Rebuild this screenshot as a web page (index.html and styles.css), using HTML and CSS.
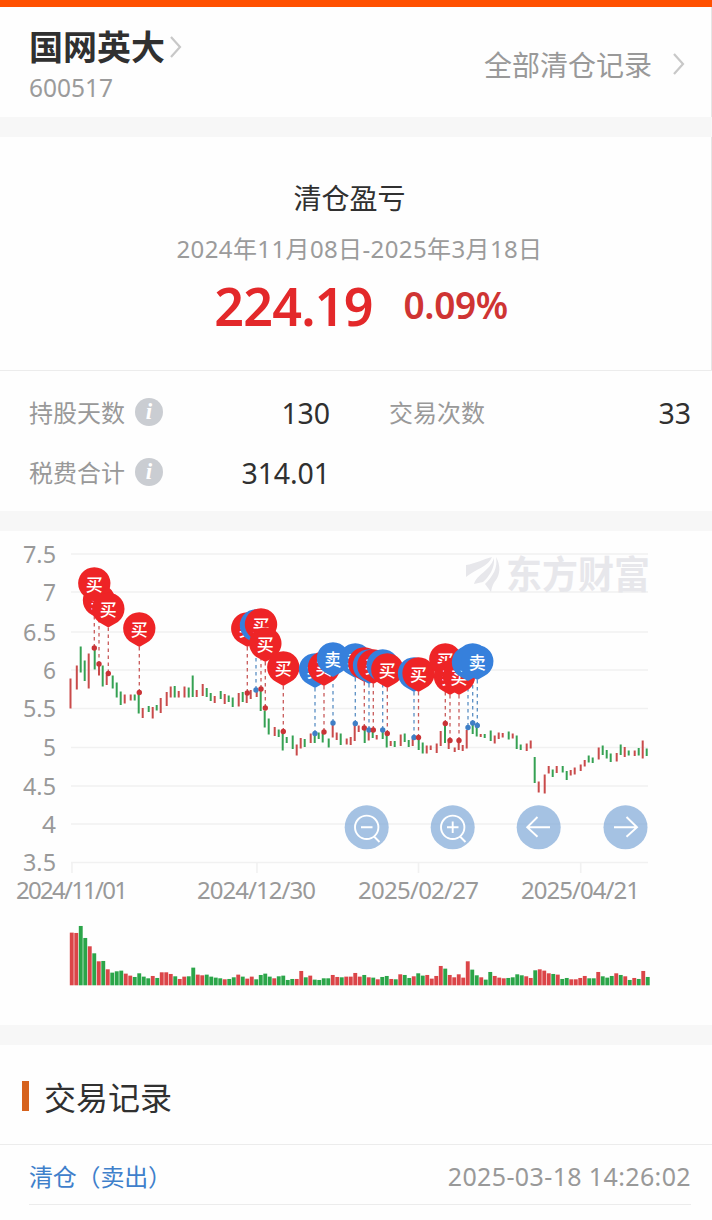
FILE: index.html
```html
<!DOCTYPE html>
<html lang="zh-CN">
<head>
<meta charset="utf-8">
<title>清仓盈亏</title>
<link rel="stylesheet" href="styles.css">
</head>
<body>
<main class="page">
  <div class="topbar"></div>
  <header class="stock">
    <div>
      <div class="stock-name">国网英大<svg class="chev" width="14" height="24" viewBox="0 0 14 24"><path d="M2 2l9 10-9 10"/></svg></div>
      <div class="stock-code">600517</div>
    </div>
    <div class="all-records">全部清仓记录<svg class="chev" width="14" height="24" viewBox="0 0 14 24"><path d="M2 2l9 10-9 10"/></svg></div>
  </header>
  <div class="band"></div>
  <section class="profit">
    <h2 class="profit-title">清仓盈亏</h2>
    <div class="profit-range">2024年11月08日-2025年3月18日</div>
    <div class="profit-values"><span class="amount">224.19</span><span class="percent">0.09%</span></div>
  </section>
  <section class="stats">
    <div class="stat"><span class="label">持股天数</span><span class="info">i</span><span class="value">130</span></div>
    <div class="stat"><span class="label">交易次数</span><span class="value">33</span></div>
    <div class="stat"><span class="label">税费合计</span><span class="info">i</span><span class="value">314.01</span></div>
  </section>
  <div class="band"></div>
  <section class="chart">
    <svg id="chart" width="712" height="494" viewBox="0 531 712 494">
      <g id="grid" class="grid"></g>
      <g class="watermark">
        <path d="M466 565C475 564 483 559 492 557C489 566 476 569 466 577Z"/>
        <path d="M494 558C495 568 489 577 483 582L474 584C477 574 490 571 494 558Z"/>
        <path d="M496 557C501 566 500 574 496 580C492 585 492 588 491 592L485 584C493 576 498 568 496 557Z"/>
        <text x="506" y="588" textLength="144" lengthAdjust="spacingAndGlyphs">东方财富</text>
      </g>
      <g id="axis" class="axis"></g>
      <g id="candles"></g>
      <g id="volume"></g>
      <g id="stems"></g>
      <g id="pins"></g>
      <g class="controls">
        <circle cx="366.7" cy="827.3" r="22"/><circle cx="452.7" cy="827.3" r="22"/>
        <circle cx="538.7" cy="827.3" r="22"/><circle cx="625.5" cy="827.3" r="22"/>
        <path d="M361 827.3h11.5M374 836.5l5.5 5.5"/><circle class="ring" cx="366.7" cy="827.3" r="11.7"/>
        <path d="M447 827.3h11.5M452.7 821.5v11.5M460 836.5l5.5 5.5"/><circle class="ring" cx="452.7" cy="827.3" r="11.7"/>
        <path d="M550 827.3h-22.5M537.5 817l-10.3 10.3 10.3 9.5"/>
        <path d="M614 827.3h22.5M626.5 817l10.5 10.3-10.5 9.5"/>
      </g>
    </svg>
  </section>
  <div class="band"></div>
  <section class="records">
    <h2 class="records-title">交易记录</h2>
    <div class="record"><span class="record-type">清仓（卖出）</span><time class="record-time">2025-03-18 14:26:02</time></div>
  </section>
</main>
<script src="chart.js"></script>
</body>
</html>
```
FILE: styles.css
```css
* { box-sizing: border-box; }
body {
  margin: 0;
  background: #fefefe;
  color: #303030;
  font-family: "Noto Sans", "Noto Sans CJK SC", sans-serif;
}
h2 { margin: 0; font-weight: 400; }
.page { width: 712px; height: 1220px; overflow: hidden; }
.topbar { height: 7px; background: #ff5000; }
.band { height: 20px; background: #f7f7f7; }
.chev { fill: none; stroke: #c8c8c8; stroke-width: 2.2; }

.stock {
  display: flex;
  justify-content: space-between;
  height: 110px;
  padding: 20px 25px 0 29px;
  border-right: 1px solid #e6e6e6;
}
.stock-name {
  display: flex;
  align-items: center;
  gap: 4px;
  height: 40px;
  font-size: 34px;
  font-weight: 700;
  line-height: 40px;
}
.stock-code { margin-top: 6px; font-size: 24.5px; line-height: 30px; color: #9b9b9b; }
.all-records {
  display: flex;
  align-items: center;
  gap: 20px;
  height: 73px;
  font-size: 28px;
  color: #999;
}

.profit {
  height: 233px;
  padding-top: 42px;
  border-right: 1px solid #e6e6e6;
  text-align: center;
}
.profit-title { padding-right: 12px; font-size: 28px; line-height: 38px; }
.profit-range { margin-top: 16px; padding-left: 8px; font-size: 24px; line-height: 32px; letter-spacing: 0.38px; color: #9b9b9b; }
.profit-values {
  display: flex;
  justify-content: center;
  align-items: flex-start;
  gap: 31px;
  margin-top: 8px;
  padding-left: 11px;
  font-weight: 600;
}
.amount { font-size: 52px; line-height: 66px; letter-spacing: -0.8px; color: #e3282a; }
.percent { font-size: 37px; line-height: 64px; letter-spacing: -0.4px; color: #cf3433; }

.stats {
  display: grid;
  grid-template-columns: 301px 302px;
  grid-auto-rows: 60px;
  column-gap: 59px;
  height: 141px;
  padding: 12px 21px 0 29px;
  border-top: 1px solid #ececec;
}
.stat { display: flex; align-items: center; }
.label { margin-top: -3px; font-size: 24px; color: #999; }
.info {
  width: 28px;
  height: 28px;
  margin: -3px 0 0 10px;
  border-radius: 50%;
  background: #cacdd2;
  color: #fff;
  font: italic 700 23px/27px "Liberation Serif", serif;
  text-align: center;
}
.value { margin-left: auto; font-size: 28.5px; letter-spacing: -0.1px; }

.chart { height: 494px; }
.chart svg { display: block; }
.grid { stroke: #f1f1f1; stroke-width: 1.6; }
.axis { fill: #999; font-size: 24px; }
.watermark { fill: #e7e7eb; font: 700 38px "Noto Sans CJK SC", sans-serif; }
.up { fill: #c94b4b; }
.down { fill: #35a153; }
.vol-up { fill: #db4548; }
.vol-down { fill: #2ba549; }
.stem { stroke-width: 1.3; stroke-dasharray: 3.5 3.5; }
.buy { fill: #ee2426; }
.sell { fill: #3680dc; }
.stem-buy { stroke: #c85a5a; }
.stem-sell { stroke: #5a8fc4; }
.dot-buy { fill: #c93336; }
.dot-sell { fill: #3f7fc6; }
.pin-text { fill: #fff; font: 500 17px "Noto Sans CJK SC", sans-serif; text-anchor: middle; }
.controls { fill: #7fa8d7; fill-opacity: 0.7; }
.controls path, .controls .ring { fill: none; stroke: #fff; stroke-width: 1.9; }

.records { height: 175px; }
.records-title {
  display: flex;
  align-items: center;
  gap: 15px;
  height: 100px;
  padding: 2px 0 0 22px;
  font-size: 32px;
  border-bottom: 1px solid #ececec;
}
.records-title::before { content: ""; width: 7px; height: 30px; background: #d6621d; }
.record {
  display: flex;
  align-items: center;
  justify-content: space-between;
  height: 60px;
  margin: 0 21px 0 29px;
  padding-top: 2px;
  border-bottom: 1px solid #ececec;
}
.record-type { font-size: 24px; letter-spacing: -0.2px; color: #3f80cb; }
.record-time { font-size: 25px; letter-spacing: 0.37px; color: #999; }
```
FILE: chart.js
```js
const NS = "http://www.w3.org/2000/svg";
function add(parent, tag, attrs, text) {
  const el = document.createElementNS(NS, tag);
  for (const key in attrs) el.setAttribute(key, attrs[key]);
  if (text) el.textContent = text;
  document.getElementById(parent).appendChild(el);
}

// Price axis: label, gridline y, label left edge
[["7.5", 554, 23], ["7", 592, 43], ["6.5", 632, 23], ["6", 670, 43], ["5.5", 708.5, 23],
 ["5", 747.5, 43], ["4.5", 786, 23], ["4", 824, 42], ["3.5", 862.5, 23]].forEach(([label, y, x]) => {
  add("grid", "line", { x1: 71, x2: 648, y1: y, y2: y });
  add("axis", "text", { x, y: y + 8.5, textLength: 56 - x, lengthAdjust: "spacingAndGlyphs" }, label);
});

// Date axis: label, left edge, width, tick x
[["2024/11/01", 16, 112, 72], ["2024/12/30", 197, 119, 257],
 ["2025/02/27", 358, 121, 418.5], ["2025/04/21", 521, 119, 580.7]].forEach(([label, x, w, tick]) => {
  add("grid", "line", { x1: tick, x2: tick, y1: 863, y2: 873 });
  add("axis", "text", { x, y: 898.5, textLength: w }, label);
});

// Candles: x, high y, low y, direction
const candles = `70.5 678.5 708.5 R,76.8 665.5 689.5 R,80.7 646.5 672.5 G,84.7 660.5 681 G,88.7 653.5 688.5 R,94.7 648 669.5 G,99 664 675.5 R,102.7 665.5 686.5 G,106.7 675 685 R,112.7 675.5 688.5 G,116.7 682.5 697.5 G,120.7 691.5 705 G,124.7 694.5 703.5 R,130.7 694.5 700.5 R,134.7 694.5 700.5 G,138.7 694.5 713.5 G,142.7 708 718 R,148.7 706 712 G,152.7 707 718.5 R,156.7 705 710.5 G,160.7 698 713 R,166.7 692 706 R,170.7 686.5 697.5 R,174.7 686 697.5 G,178.7 691 697.5 R,184.5 686.5 697.5 R,188.7 687.5 697.5 G,192.7 675.5 697 G,196.7 690 697 R,202.7 684 696 R,206.7 688 697 G,210.7 693 701 G,214.7 696 703 R,220.7 691 699 G,224.7 694 704 R,228.7 695.5 702 G,232.7 697.5 707 G,238.7 693 706.5 R,242.7 692 702 G,246.7 693 703 R,250.7 690 699 R,256.7 691 697 R,260.7 690 711 G,264.7 710.5 727.5 G,268.7 718.5 734.5 G,274.7 727 736 R,278.7 729.5 737 G,282.7 732 750.5 G,286.7 737 743 G,292.7 735.5 749 G,296.7 744.5 755.5 R,300.7 738 748.5 R,304.7 739 747 G,310.7 733.5 743 R,314.7 734 743 G,318.7 732.5 739 G,322.7 732.5 742.5 G,328.7 738.5 747.5 G,332.7 723.5 737.5 R,336.7 732.5 740 R,340.7 733.5 745 G,346.7 738.5 744.5 R,350.7 737 745 R,354.7 724 741 R,358.7 725.5 732 R,364.7 729 743 G,368.7 730.5 740.5 R,372.7 730.5 738 G,376.7 735 739.5 R,382.7 731.5 739 G,386.7 734 747.5 G,390.7 741 746 R,394.7 741 747 G,400.7 734.5 746 R,404.7 733.5 742 G,408.7 740 747 G,412.7 739 746 R,418.7 739 750 G,422.7 742.5 753.5 G,426.7 745.5 753.5 R,430.7 745.5 750 R,436.7 743.5 753 R,440.7 731 746 R,445 724.5 743 G,448.7 742 749 R,454.7 747.5 752 R,458.7 741 750 R,462.7 745 751 R,466.7 730 748.5 R,472.7 723 734 G,476.7 726 736.5 G,480.7 734 737 R,484.7 734 738 G,490.7 730.5 741 G,494.7 735.5 743.5 R,498.7 732.5 739 R,502.7 733 737.5 R,508.7 731.5 739.5 G,512.7 733.5 738.5 R,516.7 735.5 749 G,520.7 744.5 750 G,526.7 743.5 751 R,530.7 740.5 748.5 R,534.7 757 783 G,538.7 781.5 792.5 R,544.7 774.5 793.5 R,548.7 766 773.5 R,552.7 769.5 777 G,556.7 766 773 R,562.7 766 772.5 G,566.7 771 780 G,570.7 770 775.5 R,574.7 767.5 774.5 R,580.7 764.5 771 R,584.7 760 766.5 R,588.7 755.5 762.5 G,592.7 757.5 763 G,598.7 747.5 759.5 R,602.7 745.5 755 G,606.7 750 758.5 G,610.7 753.5 762 G,616.7 753 761.5 R,620.7 744.5 755 G,624.7 747 757 R,628.7 750.5 755.5 G,634.7 750.5 756 R,638.7 748 755.5 G,642.7 740.5 758.5 R,646.7 748.5 756 G`;
candles.split(",").forEach(row => {
  const [x, top, bottom, dir] = row.split(" ");
  add("candles", "rect", { x: x - 1, y: top, width: 2, height: bottom - top, class: dir === "R" ? "up" : "down" });
});

// Volume bars: direction and height in thirds of a pixel
const volume = "R158 R157 G178 G142 R117 G96 R72 G73 R48 G38 G42 G44 R35 R29 G25 G36 G26 G21 R28 G22 R39 R39 R34 G27 R19 R26 G27 G53 R32 R30 G32 G26 G23 G21 R18 G19 G24 R32 G26 R20 R26 G18 G31 G35 G26 R21 G27 G29 G16 G19 R19 R43 G24 R29 G17 G16 G21 G21 R31 R25 G24 R26 R26 R37 R26 G31 R24 G23 R18 G25 G28 R19 G18 R33 G31 G22 R27 G36 G29 R31 R20 R28 R58 G50 R31 R24 R33 R23 R72 G47 G30 R24 G17 G40 R28 R23 R21 G22 G24 G33 G30 R27 R22 G45 R48 R44 R36 G34 R32 G19 G22 R18 R18 R22 R28 G21 G21 R40 G27 G23 G28 R36 G31 R27 G16 R22 G19 R43 G25";
volume.split(" ").forEach((bar, i) => {
  const h = bar.slice(1) / 3;
  add("volume", "rect", { x: 69.8 + i * 4.5, y: 985.3 - h, width: 3.9, height: h, class: bar[0] === "R" ? "vol-up" : "vol-down" });
});

// Trades: side, x, pin centre y, price point y
[["B", 99, 601, 664], ["B", 94.3, 584, 648], ["B", 108.3, 609.5, 673.5], ["B", 139.3, 629, 692.5],
 ["B", 247.3, 629, 693], ["S", 256, 626, 690], ["B", 261, 625, 689], ["B", 265.3, 644, 708],
 ["B", 283.3, 668, 731.5], ["S", 315, 670, 733.5], ["B", 324, 668, 732], ["S", 333, 659, 723],
 ["S", 355.3, 660, 723.5], ["B", 364.3, 664, 728], ["S", 369, 666, 730], ["B", 373.3, 666, 730],
 ["S", 382.7, 666, 730], ["B", 387.3, 670, 733.5], ["S", 414, 674, 737.5], ["B", 418.5, 674, 737.5],
 ["B", 445.3, 660, 723.5], ["B", 450, 677, 740.5], ["B", 459, 677, 740.5],
 ["S", 468, 663, 727.5], ["S", 472.7, 660, 723], ["S", 477.3, 662, 725.5]].forEach(([side, x, y, dot]) => {
  const kind = side === "B" ? "buy" : "sell";
  add("stems", "line", { x1: x, x2: x, y1: y + 18, y2: dot, class: "stem stem-" + kind });
  add("stems", "circle", { cx: x, cy: dot, r: 2.7, class: "dot-" + kind });
  add("pins", "path", { d: `M${x} ${y + 18}l-7 -4a16.2 16.2 0 1 1 14 0z`, class: kind });
  add("pins", "text", { x, y: y + 6.5, class: "pin-text" }, side === "B" ? "买" : "卖");
});
```
